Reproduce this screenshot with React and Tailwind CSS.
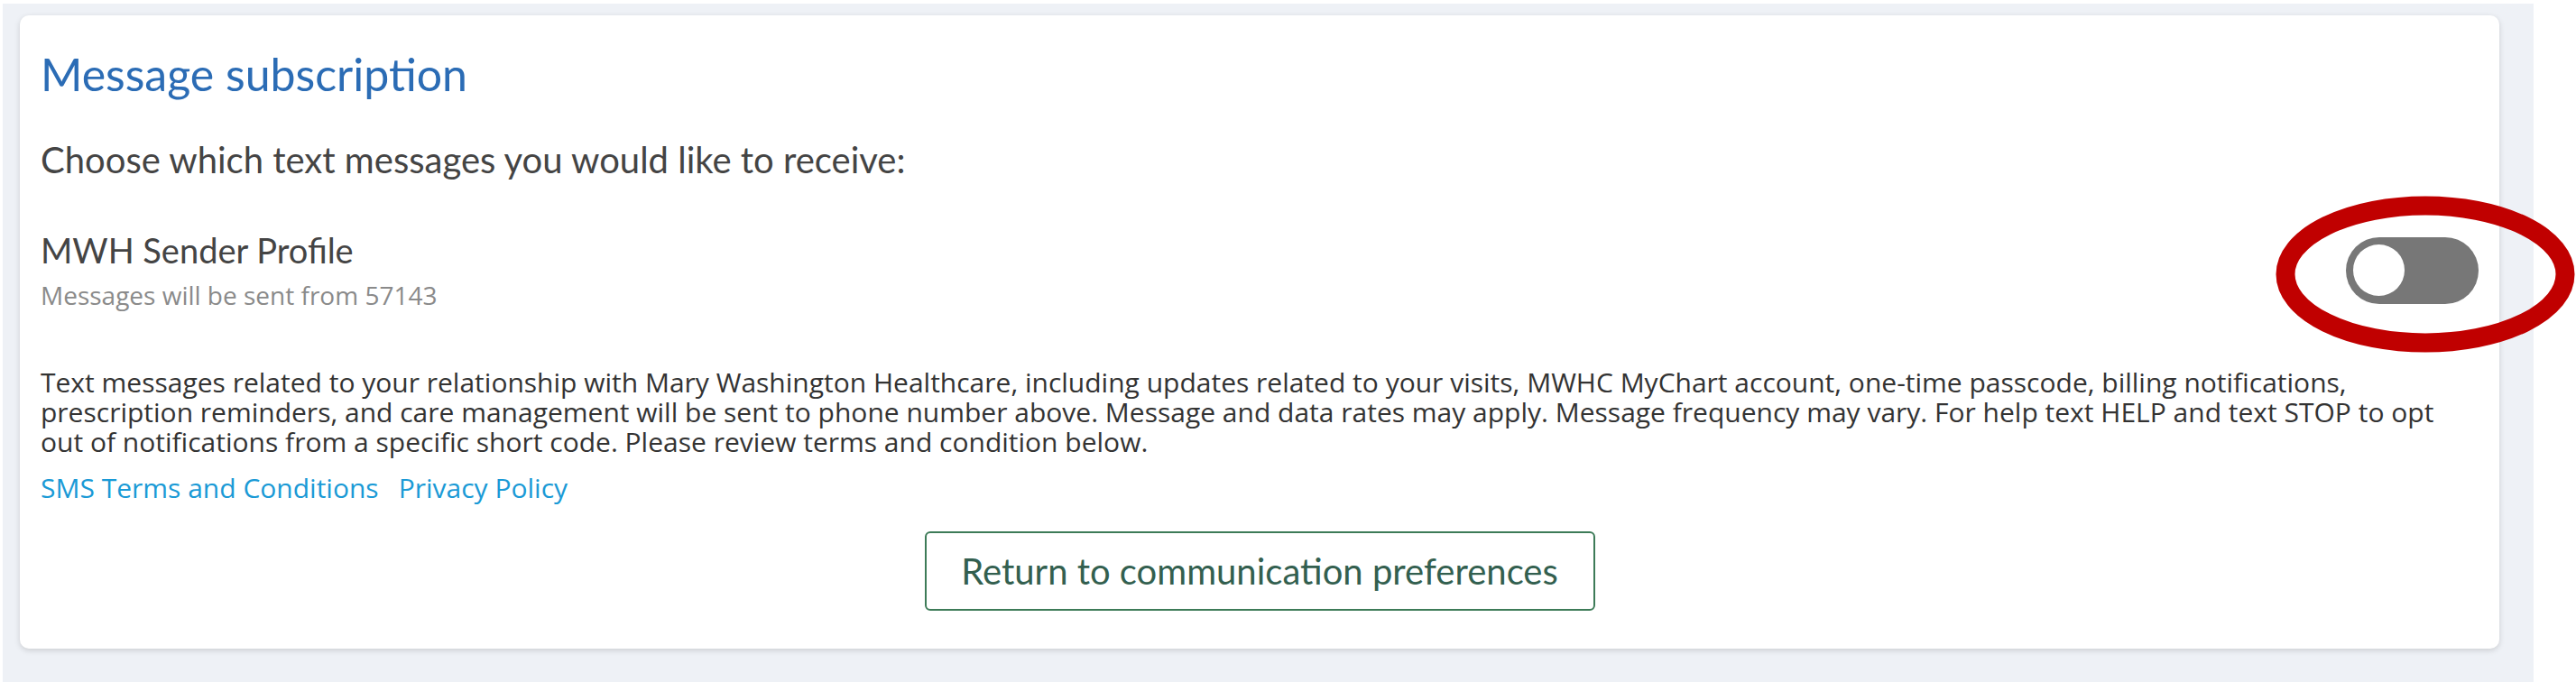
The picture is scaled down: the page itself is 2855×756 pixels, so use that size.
import React from "react";

function Toggle() {
  return (
    <div className="w-[147px] h-[74px] rounded-full bg-[#777777] flex items-center pl-[8px] shrink-0">
      <div className="w-[57px] h-[57px] rounded-full bg-white" />
    </div>
  );
}

export default function App() {
  const lato = { fontFamily: "Lato, 'Liberation Sans', sans-serif" };
  const open = { fontFamily: "'Open Sans', 'Liberation Sans', sans-serif" };

  return (
    <div className="relative w-[2855px] h-[756px] bg-white overflow-hidden">
      <div className="ml-[3px] mt-[4px] w-[2805px] h-[752px] bg-[#eef1f6] pl-[19px] pt-[13px]">
        <div className="w-[2748px] h-[702px] bg-white rounded-[10px] shadow-[0_2px_6px_rgba(0,0,0,0.15)] pl-[23px] pr-[23px] pt-[35px]">
          <h2 style={lato} className="text-[50px] leading-[60px] text-[#2b6cb5]">
            Message subscription
          </h2>

          <p style={lato} className="mt-[43px] text-[40px] leading-[44px] text-[#444444]">
            Choose which text messages you would like to receive:
          </p>

          <div className="mt-[58px] flex items-center justify-between">
            <div>
              <div style={lato} className="text-[38px] leading-[40px] text-[#444444]">
                MWH Sender Profile
              </div>
              <div style={open} className="mt-[15px] text-[28px] leading-[30px] text-[#8a8a8a]">
                Messages will be sent from 57143
              </div>
            </div>
            <Toggle />
          </div>

          <p style={open} className="mt-[65px] w-[2680px] text-[30px] leading-[33px] text-[#333333]">
            Text messages related to your relationship with Mary Washington Healthcare, including updates related to your visits, MWHC MyChart account, one-time passcode, billing notifications, prescription reminders, and care management will be sent to phone number above. Message and data rates may apply. Message frequency may vary. For help text HELP and text STOP to opt out of notifications from a specific short code. Please review terms and condition below.
          </p>

          <div style={open} className="mt-[18px] flex gap-[22px] text-[30px] leading-[33px] text-[#1a9ad6]">
            <a href="#">SMS Terms and Conditions</a>
            <a href="#">Privacy Policy</a>
          </div>

          <div className="mt-[32px] flex justify-center">
            <button
              style={lato}
              className="w-[743px] h-[88px] flex items-center justify-center border-2 border-[#3d7b58] rounded-[6px] text-[40px] leading-[44px] text-[#335f4f] bg-white"
            >
              Return to communication preferences
            </button>
          </div>
        </div>
      </div>

      <svg
        className="absolute left-[2518px] top-[213px]"
        width="340"
        height="182"
        viewBox="0 0 340 182"
      >
        <ellipse cx="170" cy="91" rx="155" ry="76" fill="none" stroke="#c00000" strokeWidth="21" />
      </svg>
    </div>
  );
}
